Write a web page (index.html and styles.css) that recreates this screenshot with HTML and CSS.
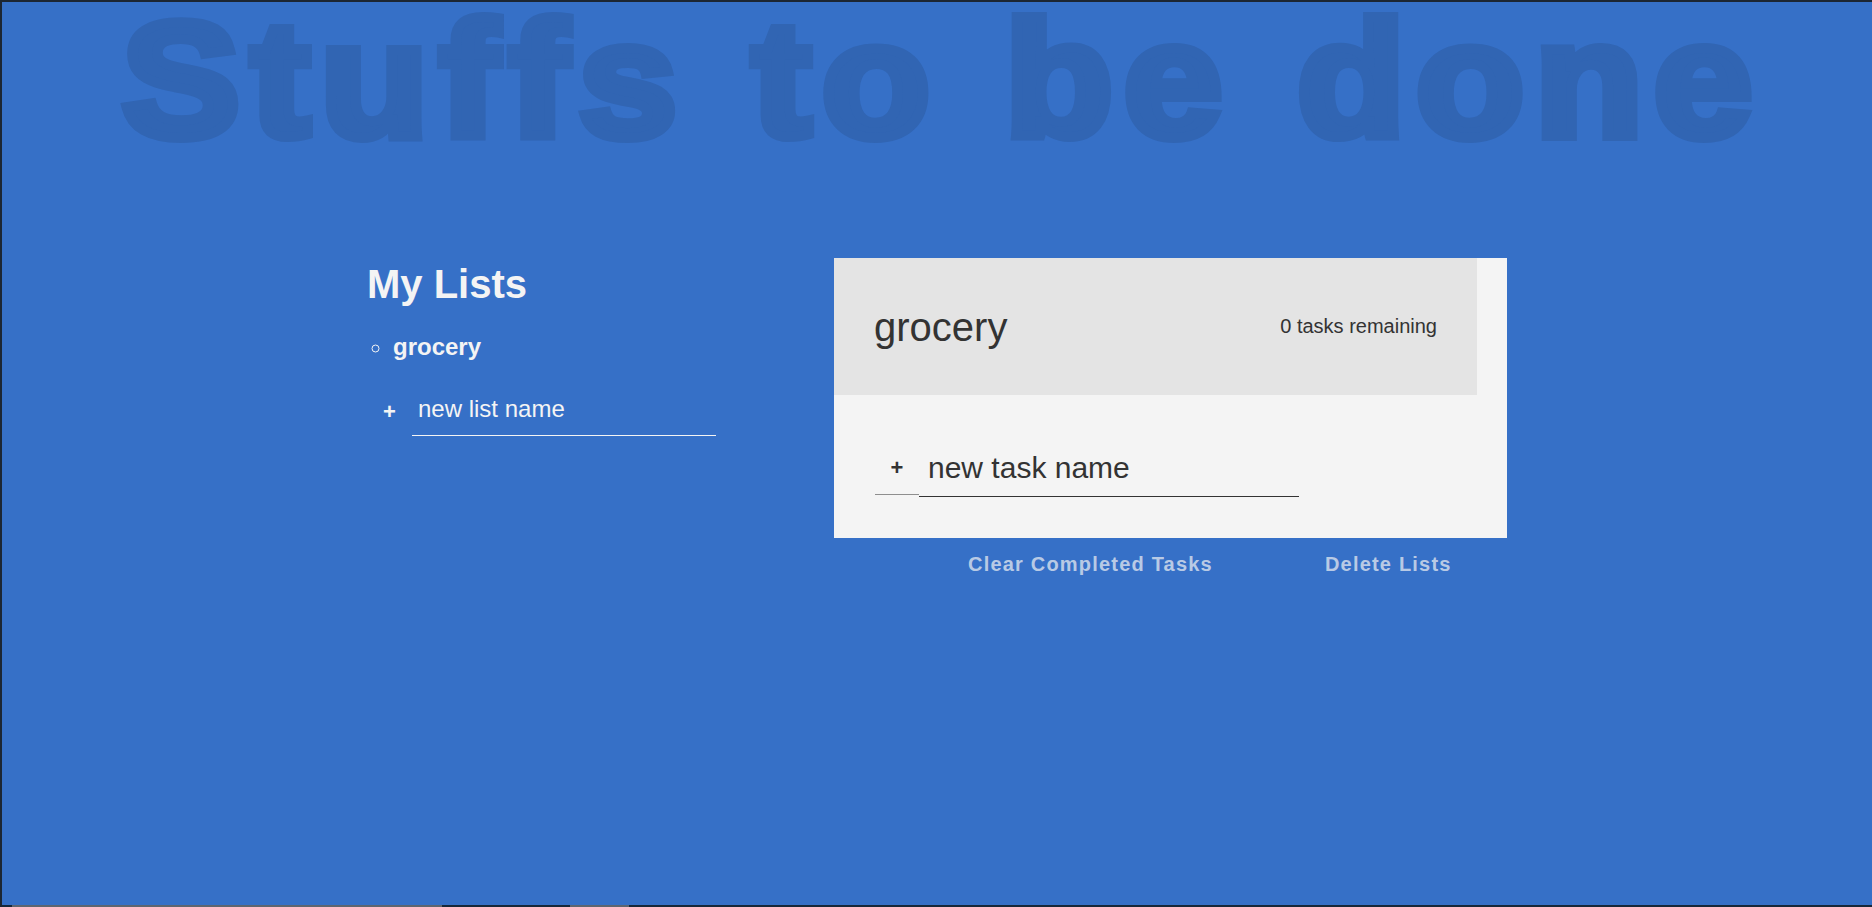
FILE: index.html
```html
<!DOCTYPE html>
<html lang="en">
<head>
<meta charset="utf-8">
<title>Stuffs to be done</title>
<link rel="stylesheet" href="styles.css">
</head>
<body>
  <h1 class="title">Stuffs to be done</h1>
  <main class="board">
    <section class="all-lists">
      <h2 class="lists-title">My Lists</h2>
      <ul class="list-names">
        <li class="list-name active-list">grocery</li>
      </ul>
      <form class="new-form list-form">
        <button class="create create-list" type="button">+</button>
        <input class="new new-list" type="text" placeholder="new list name">
      </form>
    </section>
    <section class="active-col">
      <div class="todo-card">
        <div class="todo-header">
          <h2 class="list-title">grocery</h2>
          <p class="task-count">0 tasks remaining</p>
        </div>
        <div class="todo-body">
          <form class="new-form task-form">
            <button class="create create-task" type="button">+</button>
            <input class="new new-task" type="text" placeholder="new task name">
          </form>
        </div>
      </div>
      <div class="delete-stuff">
        <button class="btn-delete" type="button">Clear Completed Tasks</button>
        <button class="btn-delete" type="button">Delete Lists</button>
      </div>
    </section>
  </main>
  <div class="statusbar">
    <span class="seg seg-a"></span>
    <span class="seg seg-b"></span>
  </div>
</body>
</html>
```
FILE: styles.css
```css
*, *::before, *::after {
  box-sizing: border-box;
}

html {
  background: #3670c7;
}

body {
  margin: 0;
  height: 907px;
  overflow: hidden;
  display: flex;
  flex-direction: column;
  background: #3670c7;
  color: #f4f4f4;
  font-family: "Liberation Sans", Arial, sans-serif;
  border-top: 2px solid #1c2633;
  border-left: 2px solid #1c2633;
}

.title {
  margin: 0;
  padding-left: 10px;
  text-align: center;
  font-size: 164px;
  line-height: 156px;
  font-weight: 700;
  letter-spacing: 9.9px;
  word-spacing: 4px;
  color: #3165b3;
  -webkit-text-stroke: 10px #3165b3;
  white-space: nowrap;
  transform: scaleX(1.08);
  transform-origin: 50% 50%;
}

.board {
  display: flex;
  justify-content: center;
  margin-top: 100px;
}

.all-lists {
  width: 467px;
  padding-top: 3px;
}

.lists-title {
  margin: 0;
  font-size: 40px;
  line-height: 46px;
  font-weight: 700;
}

.list-names {
  margin: 20px 0 0;
  padding-left: 26px;
  list-style: circle;
}

.list-name {
  font-size: 24px;
  line-height: 40.8px;
  font-weight: 700;
}

.new-form {
  display: flex;
  align-items: flex-end;
}

.list-form {
  margin-top: 21px;
}

.create {
  background: none;
  border: 0;
  padding: 0;
  font-family: inherit;
  font-weight: 700;
  font-size: 22px;
  color: inherit;
}

.create-list {
  width: 45px;
  height: 47px;
}

.new {
  background: transparent;
  border: 0;
  outline: none;
  font-family: inherit;
}

.new-list {
  width: 304px;
  font-size: 24px;
  line-height: 28px;
  padding: 6px 6px 12px 6px;
  color: #f4f4f4;
  border-bottom: 1px solid #f4f4f4;
}

.new-list::placeholder {
  color: #f4f4f4;
  opacity: 1;
}

.todo-card {
  width: 673px;
  background: #f4f4f4;
  color: #333;
}

.todo-header {
  width: 643px;
  height: 137px;
  padding: 0 40px;
  display: flex;
  align-items: center;
  justify-content: space-between;
  background: #e4e4e4;
}

.list-title {
  margin: 0;
  font-size: 40px;
  line-height: 46px;
  font-weight: 400;
}

.task-count {
  margin: 0;
  font-size: 20px;
}

.todo-body {
  padding: 49px 40px 41px 41px;
}

.create-task {
  width: 44px;
  height: 44px;
  margin-bottom: 2px;
  padding: 0 0 10px;
  border-bottom: 1px solid #8e8e8e;
  color: #333;
}

.new-task {
  width: 380px;
  font-size: 30px;
  line-height: 34px;
  padding: 7px 8px 11px 9px;
  color: #333;
  border-bottom: 1px solid #333;
}

.new-task::placeholder {
  color: #333;
  opacity: 1;
}

.delete-stuff {
  display: flex;
  gap: 112px;
  padding-left: 134px;
  margin-top: 15px;
}

.btn-delete {
  background: none;
  border: 0;
  padding: 0;
  font-family: inherit;
  font-size: 20px;
  line-height: 23px;
  font-weight: 700;
  letter-spacing: 1.2px;
  color: rgba(244, 244, 244, 0.7);
}

.statusbar {
  margin-top: auto;
  height: 2px;
  display: flex;
  background: #16283a;
}

.seg {
  height: 2px;
  background: #5d6570;
}

.seg-a {
  margin-left: 10px;
  width: 430px;
}

.seg-b {
  margin-left: 128px;
  width: 59px;
}
```
